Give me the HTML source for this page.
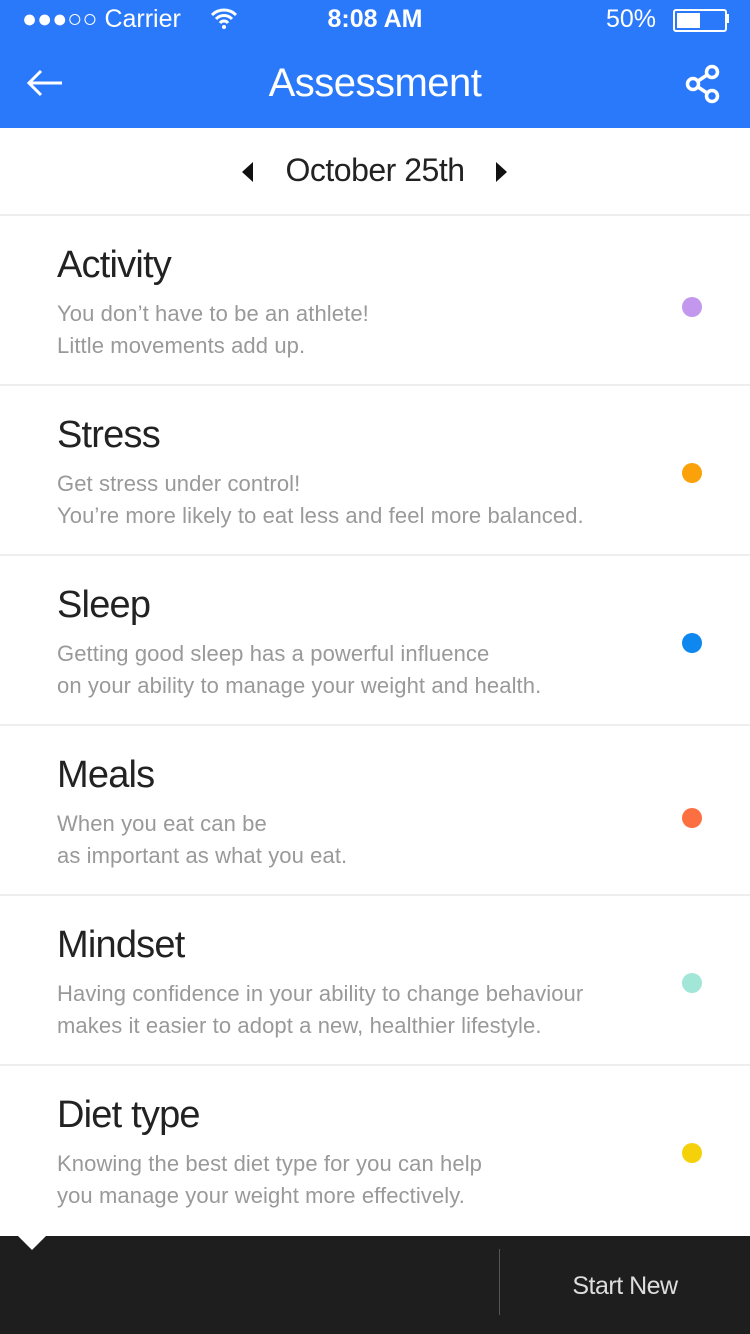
<!DOCTYPE html>
<html><head><meta charset="utf-8"><style>
body{margin:0;width:750px;height:1334px;position:relative;overflow:hidden;background:#fff;font-family:"Liberation Sans",sans-serif}
.hdr{position:absolute;left:0;top:0;width:750px;height:128px;background:#2b79fb;color:#fff}
.abs{position:absolute}
.row{position:absolute;left:0;width:750px;height:169px;border-top:2px solid #eee}
.t{position:absolute;left:57px;top:28px;font-size:38px;color:#222;letter-spacing:-0.8px}
.d{position:absolute;left:57px;top:82px;font-size:22px;line-height:32px;color:#999;letter-spacing:0.1px}
.dot{position:absolute;left:682px;width:20px;height:20px;border-radius:50%}
</style></head><body>
<div class="hdr">
<div class="abs" style="left:22px;top:4px;font-size:25px;line-height:30px">●●●○○ Carrier</div>
<svg class="abs" style="left:210px;top:7px" width="28" height="22" viewBox="0 0 28 22"><path d="M2 8a17 17 0 0 1 24 0M6 12a11 11 0 0 1 16 0M10 16a5 5 0 0 1 8 0" stroke="#fff" stroke-width="3" fill="none"/><circle cx="14" cy="20" r="2" fill="#fff"/></svg>
<div class="abs" style="left:0;width:750px;text-align:center;top:4px;font-size:25px;line-height:30px;font-weight:bold">8:08 AM</div>
<div class="abs" style="left:606px;top:4px;font-size:25px;line-height:30px">50%</div>
<div class="abs" style="left:673px;top:9px;width:50px;height:19px;border:2px solid #fff;border-radius:3px"><div style="margin:2px;width:23px;height:15px;background:#fff"></div></div>
<div class="abs" style="left:726px;top:14px;width:3px;height:9px;background:#fff"></div>
<svg class="abs" style="left:26px;top:68px" width="38" height="30" viewBox="0 0 38 30"><path d="M36 15H3M15 3L3 15l12 12" stroke="#fff" stroke-width="3" fill="none"/></svg>
<div class="abs" style="left:0;width:750px;text-align:center;top:58px;font-size:40px;line-height:50px;letter-spacing:-0.5px">Assessment</div>
<svg class="abs" style="left:684px;top:64px" width="40" height="40" viewBox="0 0 40 40"><g stroke="#fff" stroke-width="3.5" fill="none"><circle cx="28" cy="8" r="5.5"/><circle cx="9" cy="20" r="5.5"/><circle cx="28" cy="32" r="5.5"/><path d="M14 17l9-6M14 23l9 6"/></g></svg>
</div>
<svg class="abs" style="left:242px;top:162px" width="12" height="20"><path d="M11 0V20L0 10z" fill="#111"/></svg>
<div class="abs" style="left:0;width:750px;text-align:center;top:150px;font-size:32px;line-height:40px;color:#222;letter-spacing:-0.5px">October 25th</div>
<svg class="abs" style="left:496px;top:162px" width="12" height="20"><path d="M0 0V20L11 10z" fill="#111"/></svg>

<div class="row" style="top:214px"><div class="t">Activity</div><div class="d">You don’t have to be an athlete!<br>Little movements add up.</div><div class="dot" style="top:81px;background:#c497ee"></div></div>
<div class="row" style="top:384px"><div class="t">Stress</div><div class="d">Get stress under control!<br>You’re more likely to eat less and feel more balanced.</div><div class="dot" style="top:77px;background:#fba10a"></div></div>
<div class="row" style="top:554px"><div class="t">Sleep</div><div class="d">Getting good sleep has a powerful influence<br>on your ability to manage your weight and  health.</div><div class="dot" style="top:77px;background:#0e87ef"></div></div>
<div class="row" style="top:724px"><div class="t">Meals</div><div class="d">When you eat can be<br>as important as what you eat.</div><div class="dot" style="top:82px;background:#fc6f41"></div></div>
<div class="row" style="top:894px"><div class="t">Mindset</div><div class="d">Having confidence in your ability to change behaviour<br>makes it easier to adopt a new, healthier lifestyle.</div><div class="dot" style="top:77px;background:#a1e6d7"></div></div>
<div class="row" style="top:1064px"><div class="t">Diet type</div><div class="d">Knowing the best diet type for you can help<br>you manage your weight more effectively.</div><div class="dot" style="top:77px;background:#f5d10c"></div></div>

<div class="abs" style="left:0;top:1236px;width:750px;height:98px;background:#1e1e1e"></div>
<svg class="abs" style="left:18px;top:1236px" width="28" height="14"><path d="M0 0H28L14 14z" fill="#fff"/></svg>
<div class="abs" style="left:499px;top:1249px;width:1px;height:66px;background:#555"></div>
<div class="abs" style="left:500px;width:250px;text-align:center;top:1270px;font-size:25px;line-height:32px;color:#ddd;letter-spacing:-0.5px">Start New</div>
</body></html>
